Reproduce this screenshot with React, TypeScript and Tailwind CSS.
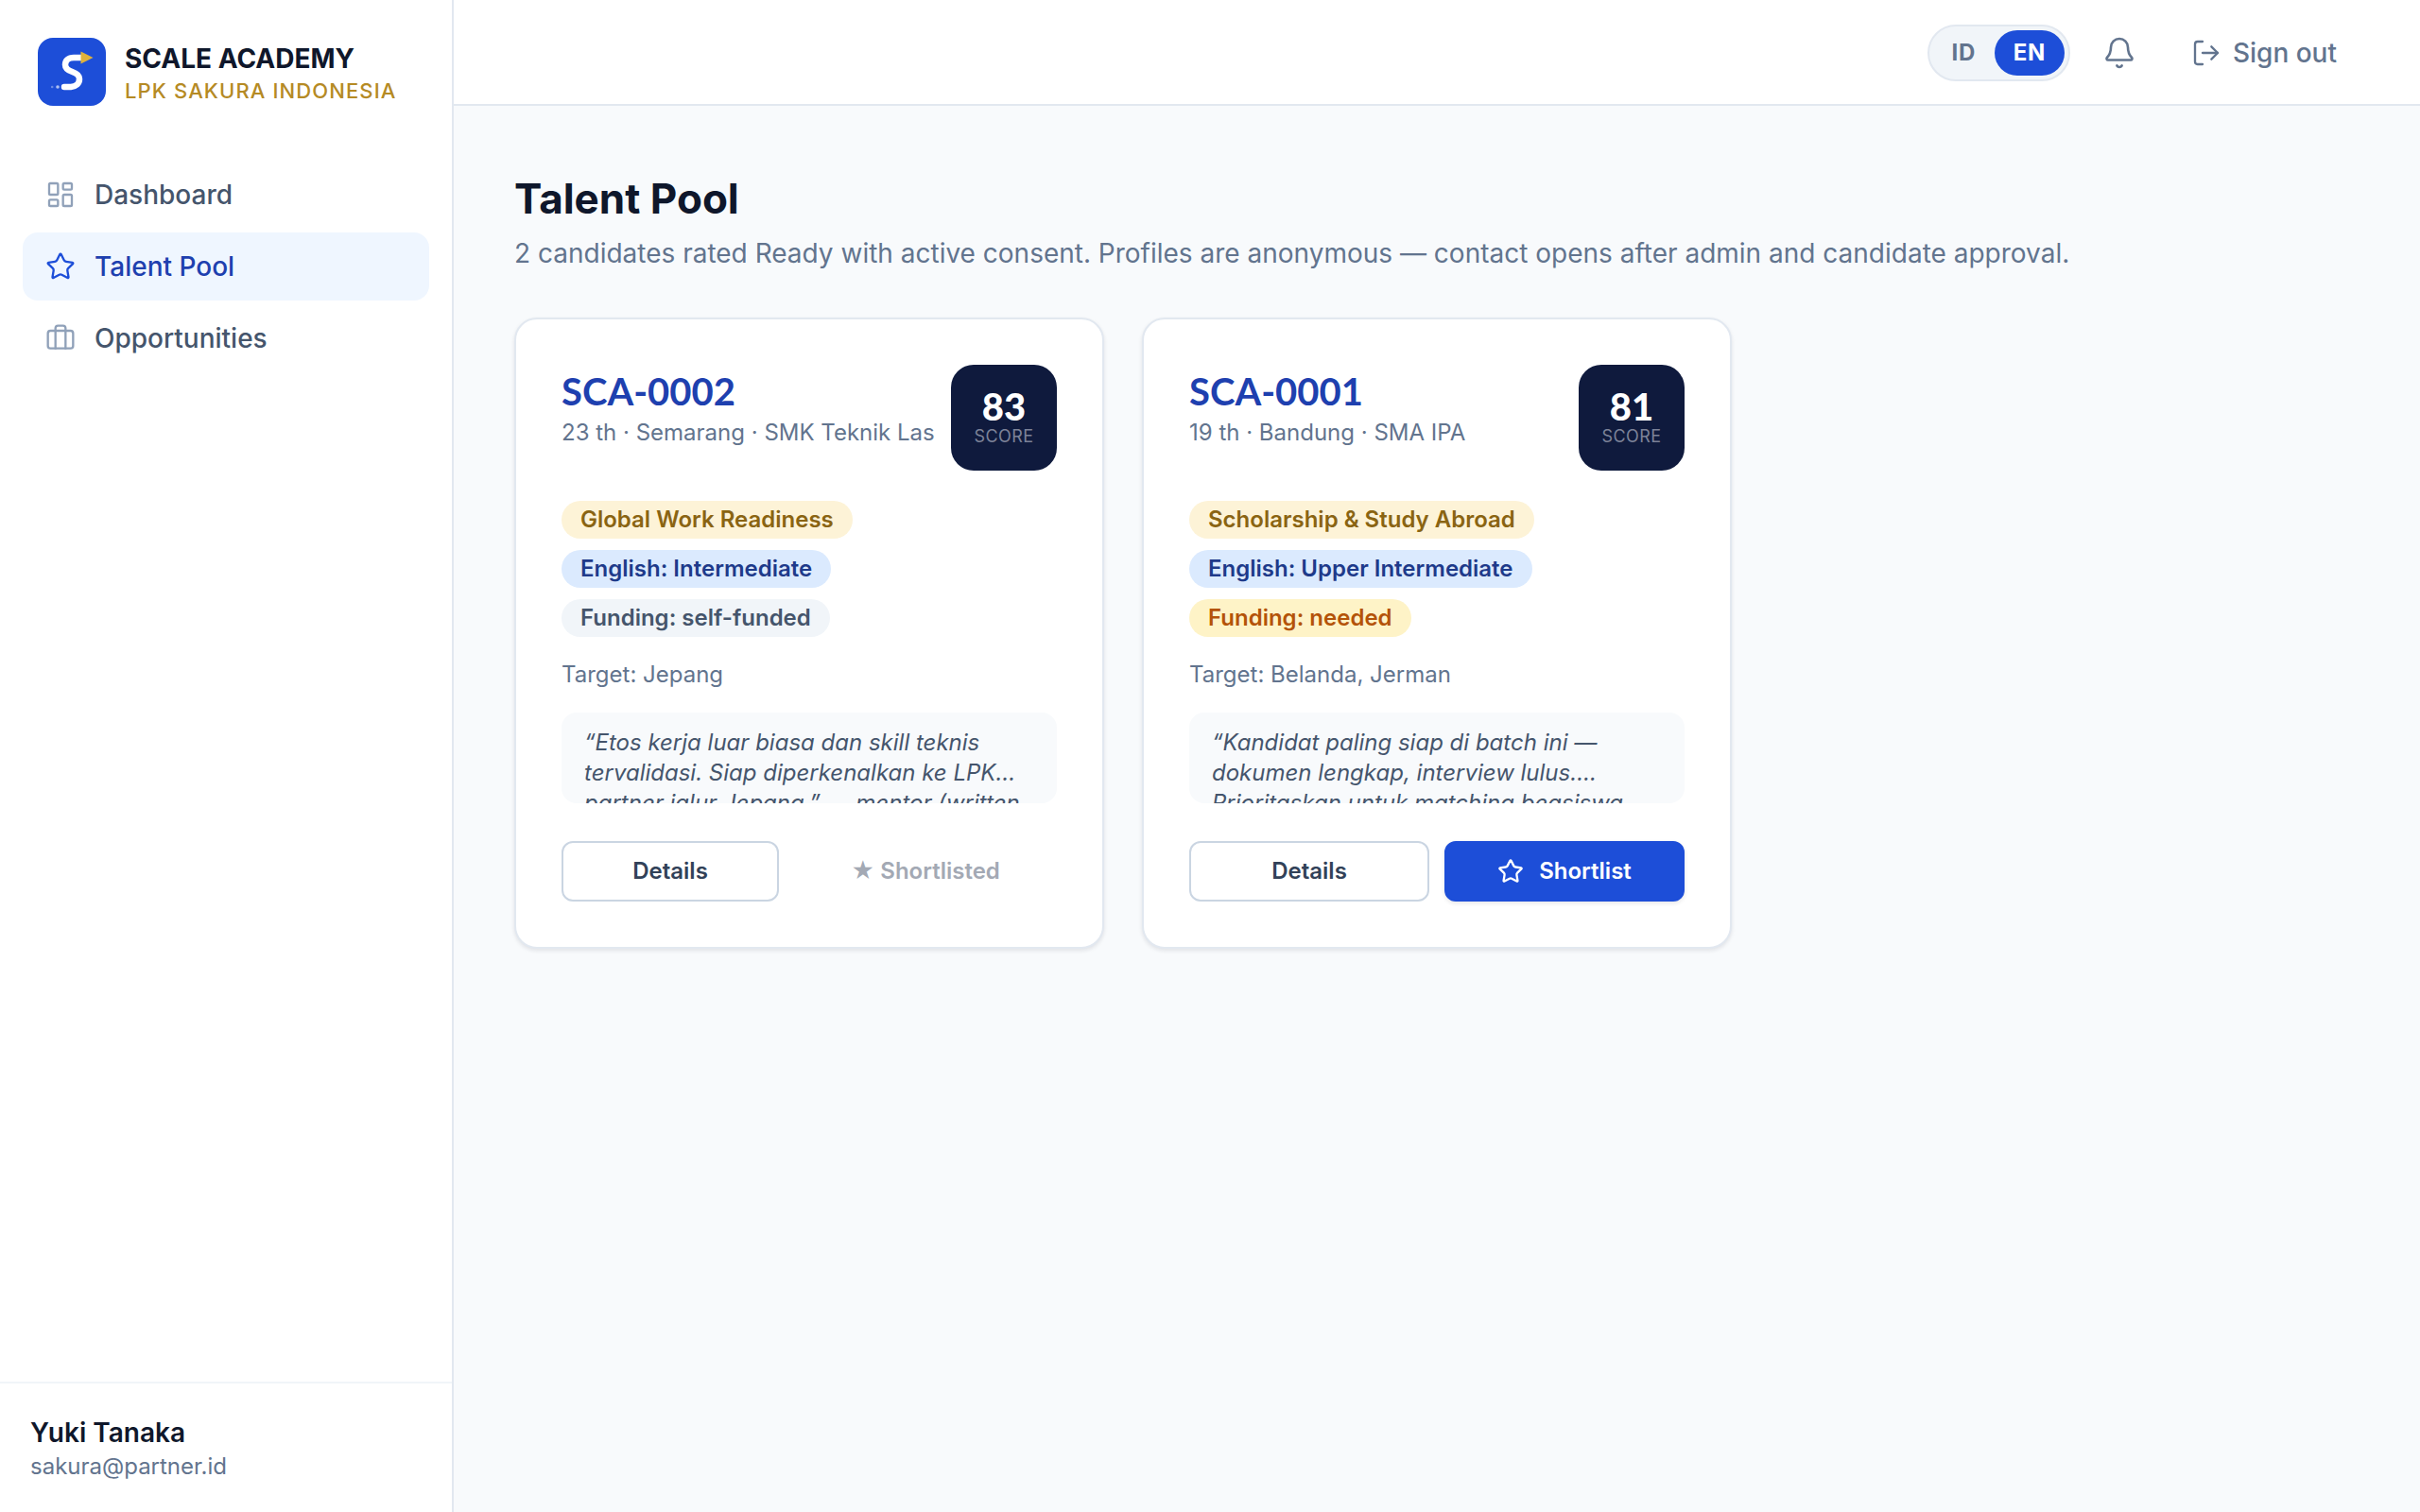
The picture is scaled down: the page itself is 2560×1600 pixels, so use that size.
import { Bell, LayoutDashboard, LogOut, Star } from "lucide-react";

type Tone = "gold" | "blue" | "slate" | "amber";

type Candidate = {
  code: string;
  summary: string;
  score: number;
  tags: { label: string; tone: Tone }[];
  target: string;
  quote: string;
  shortlisted: boolean;
};

const toneClasses: Record<Tone, string> = {
  gold: "bg-[#fdf3d7] text-[#8a6412]",
  blue: "bg-[#dbeafe] text-[#1e3a8a]",
  slate: "bg-slate-100 text-slate-600",
  amber: "bg-[#fef3c7] text-[#b45309]",
};

const candidates: Candidate[] = [
  {
    code: "SCA-0002",
    summary: "23 th · Semarang · SMK Teknik Las",
    score: 83,
    tags: [
      { label: "Global Work Readiness", tone: "gold" },
      { label: "English: Intermediate", tone: "blue" },
      { label: "Funding: self-funded", tone: "slate" },
    ],
    target: "Target: Jepang",
    quote:
      "“Etos kerja luar biasa dan skill teknis tervalidasi. Siap diperkenalkan ke LPK partner jalur Jepang.” — mentor (written recommendation)",
    shortlisted: true,
  },
  {
    code: "SCA-0001",
    summary: "19 th · Bandung · SMA IPA",
    score: 81,
    tags: [
      { label: "Scholarship & Study Abroad", tone: "gold" },
      { label: "English: Upper Intermediate", tone: "blue" },
      { label: "Funding: needed", tone: "amber" },
    ],
    target: "Target: Belanda, Jerman",
    quote:
      "“Kandidat paling siap di batch ini — dokumen lengkap, interview lulus. Prioritaskan untuk matching beasiswa Belanda.” — mentor",
    shortlisted: false,
  },
];

const navItems = [
  { label: "Dashboard", icon: LayoutDashboard, active: false },
  { label: "Talent Pool", icon: Star, active: true },
  { label: "Opportunities", icon: Luggage, active: false },
];

function Luggage({ className, strokeWidth = 2 }: { className?: string; strokeWidth?: string | number }) {
  return (
    <svg
      viewBox="0 0 24 24"
      fill="none"
      stroke="currentColor"
      strokeWidth={strokeWidth}
      strokeLinecap="round"
      strokeLinejoin="round"
      className={className}
      aria-hidden="true"
    >
      <rect x="2" y="6" width="20" height="14" rx="2" />
      <path d="M16 20V4a2 2 0 0 0-2-2h-4a2 2 0 0 0-2 2v16" />
    </svg>
  );
}

function Logo() {
  return (
    <svg viewBox="0 0 72 72" className="size-[72px] shrink-0 rounded-2xl bg-[#1d4ed8]" aria-hidden="true">
      <path
        d="M46 21H38C32 21 29 24.5 29 28.5C29 32.5 32 34.5 36.5 36C41 37.5 44 39.5 44 43.5C44 48.5 40.5 51.5 35 52H28"
        fill="none"
        stroke="#fff"
        strokeWidth="6.5"
        strokeLinecap="round"
        strokeLinejoin="round"
      />
      <path d="M45.5 14.5L58.5 21L45.5 27.5Z" fill="#e0b23c" />
      <circle cx="21" cy="52" r="1.8" fill="#fff" opacity="0.65" />
      <circle cx="15.2" cy="52" r="1.3" fill="#fff" opacity="0.35" />
    </svg>
  );
}

function Sidebar() {
  return (
    <aside className="flex w-[480px] shrink-0 flex-col border-r-2 border-slate-200 bg-white">
      <div className="flex items-center gap-5 p-10">
        <Logo />
        <div className="pt-1">
          <p className="text-[28px] leading-9 font-bold text-slate-900">SCALE ACADEMY</p>
          <p className="text-[22px] leading-8 font-medium tracking-wider text-[#b58a24]">LPK SAKURA INDONESIA</p>
        </div>
      </div>
      <nav className="mt-[18px] flex flex-1 flex-col gap-1 px-6">
        {navItems.map(({ label, icon: Icon, active }) => (
          <a
            key={label}
            href="#"
            aria-current={active ? "page" : undefined}
            className={
              active
                ? "flex h-[72px] items-center gap-5 rounded-2xl bg-[#eff6ff] px-6 text-[28px] font-medium text-[#1e40af]"
                : "flex h-[72px] items-center gap-5 rounded-2xl px-6 text-[28px] font-medium text-slate-600"
            }
          >
            <Icon className={active ? "size-8 text-[#1d4ed8]" : "size-8 text-slate-400"} strokeWidth={1.75} />
            {label}
          </a>
        ))}
      </nav>
      <div className="border-t-2 border-slate-100 p-8">
        <p className="text-[28px] leading-10 font-semibold text-slate-900">Yuki Tanaka</p>
        <p className="text-2xl leading-8 text-slate-500">sakura@partner.id</p>
      </div>
    </aside>
  );
}

function TopBar() {
  return (
    <header className="flex h-28 items-center justify-end gap-3 border-b-2 border-slate-200 bg-white px-16 pt-0.5">
      <div className="flex rounded-full border-2 border-slate-200 bg-slate-100 p-1 text-2xl font-bold tracking-wide">
        <button type="button" className="h-12 rounded-full px-5 text-slate-500">
          ID
        </button>
        <button type="button" aria-pressed="true" className="h-12 rounded-full bg-[#1d4ed8] px-5 text-white">
          EN
        </button>
      </div>
      <button
        type="button"
        aria-label="Notifications"
        className="flex size-20 items-center justify-center text-slate-500"
      >
        <Bell className="size-9" strokeWidth={1.75} />
      </button>
      <button type="button" className="flex items-center gap-3 px-6 text-[28px] font-medium text-slate-500">
        <LogOut className="size-8" strokeWidth={1.75} />
        Sign out
      </button>
    </header>
  );
}

function CandidateCard({ candidate }: { candidate: Candidate }) {
  return (
    <article className="flex flex-col rounded-3xl border-2 border-slate-200 bg-white p-12 shadow-[0_2px_4px_rgba(15,23,42,0.10)]">
      <div className="flex items-start justify-between gap-4">
        <div>
          <h2 className="font-[Lato,sans-serif] text-[40px] leading-[56px] font-bold text-[#1e40af]">
            {candidate.code}
          </h2>
          <p className="text-2xl leading-8 whitespace-nowrap text-slate-500">{candidate.summary}</p>
        </div>
        <div className="flex size-28 shrink-0 flex-col items-center justify-center rounded-3xl bg-[#0f1a3d]">
          <span className="font-[Lato,sans-serif] text-[40px] leading-10 font-black text-white">
            {candidate.score}
          </span>
          <span className="text-lg leading-6 tracking-wide text-[#7c8298]">SCORE</span>
        </div>
      </div>
      <ul className="mt-8 flex flex-col items-start gap-3">
        {candidate.tags.map((tag) => (
          <li
            key={tag.label}
            className={`rounded-full px-5 text-2xl leading-10 font-semibold ${toneClasses[tag.tone]}`}
          >
            {tag.label}
          </li>
        ))}
      </ul>
      <p className="mt-6 text-2xl leading-8 text-slate-500">{candidate.target}</p>
      <blockquote className="mt-6 line-clamp-2 rounded-2xl bg-slate-50 px-6 py-4 text-2xl leading-8 text-slate-600 italic">
        {candidate.quote}
      </blockquote>
      <div className="mt-10 flex gap-4 text-2xl font-semibold">
        <button type="button" className="h-16 flex-1 rounded-xl border-2 border-slate-300 bg-white text-slate-700">
          Details
        </button>
        {candidate.shortlisted ? (
          <button
            type="button"
            disabled
            className="h-16 flex-1 border-2 border-transparent px-6 whitespace-nowrap text-[#a3a9b4]"
          >
            ★ Shortlisted
          </button>
        ) : (
          <button
            type="button"
            className="flex h-16 flex-1 items-center justify-center gap-4 rounded-xl border-2 border-[#1d4ed8] bg-[#1d4ed8] text-white shadow-[0_2px_4px_rgba(15,23,42,0.10)]"
          >
            <Star className="size-7" strokeWidth={2} />
            Shortlist
          </button>
        )}
      </div>
    </article>
  );
}

export default function App() {
  return (
    <div className="flex min-h-screen bg-slate-50 font-[Inter,'DejaVu_Sans',sans-serif]">
      <Sidebar />
      <div className="flex min-w-0 flex-1 flex-col">
        <TopBar />
        <main className="p-16">
          <h1 className="pt-1 text-[44px] leading-[60px] font-bold text-slate-900">Talent Pool</h1>
          <p className="mt-2 text-[28px] leading-10 text-slate-500">
            2 candidates rated Ready with active consent. Profiles are anonymous — contact opens after admin and
            candidate approval.
          </p>
          <div className="mt-12 grid grid-cols-3 items-start gap-10">
            {candidates.map((candidate) => (
              <CandidateCard key={candidate.code} candidate={candidate} />
            ))}
          </div>
        </main>
      </div>
    </div>
  );
}
